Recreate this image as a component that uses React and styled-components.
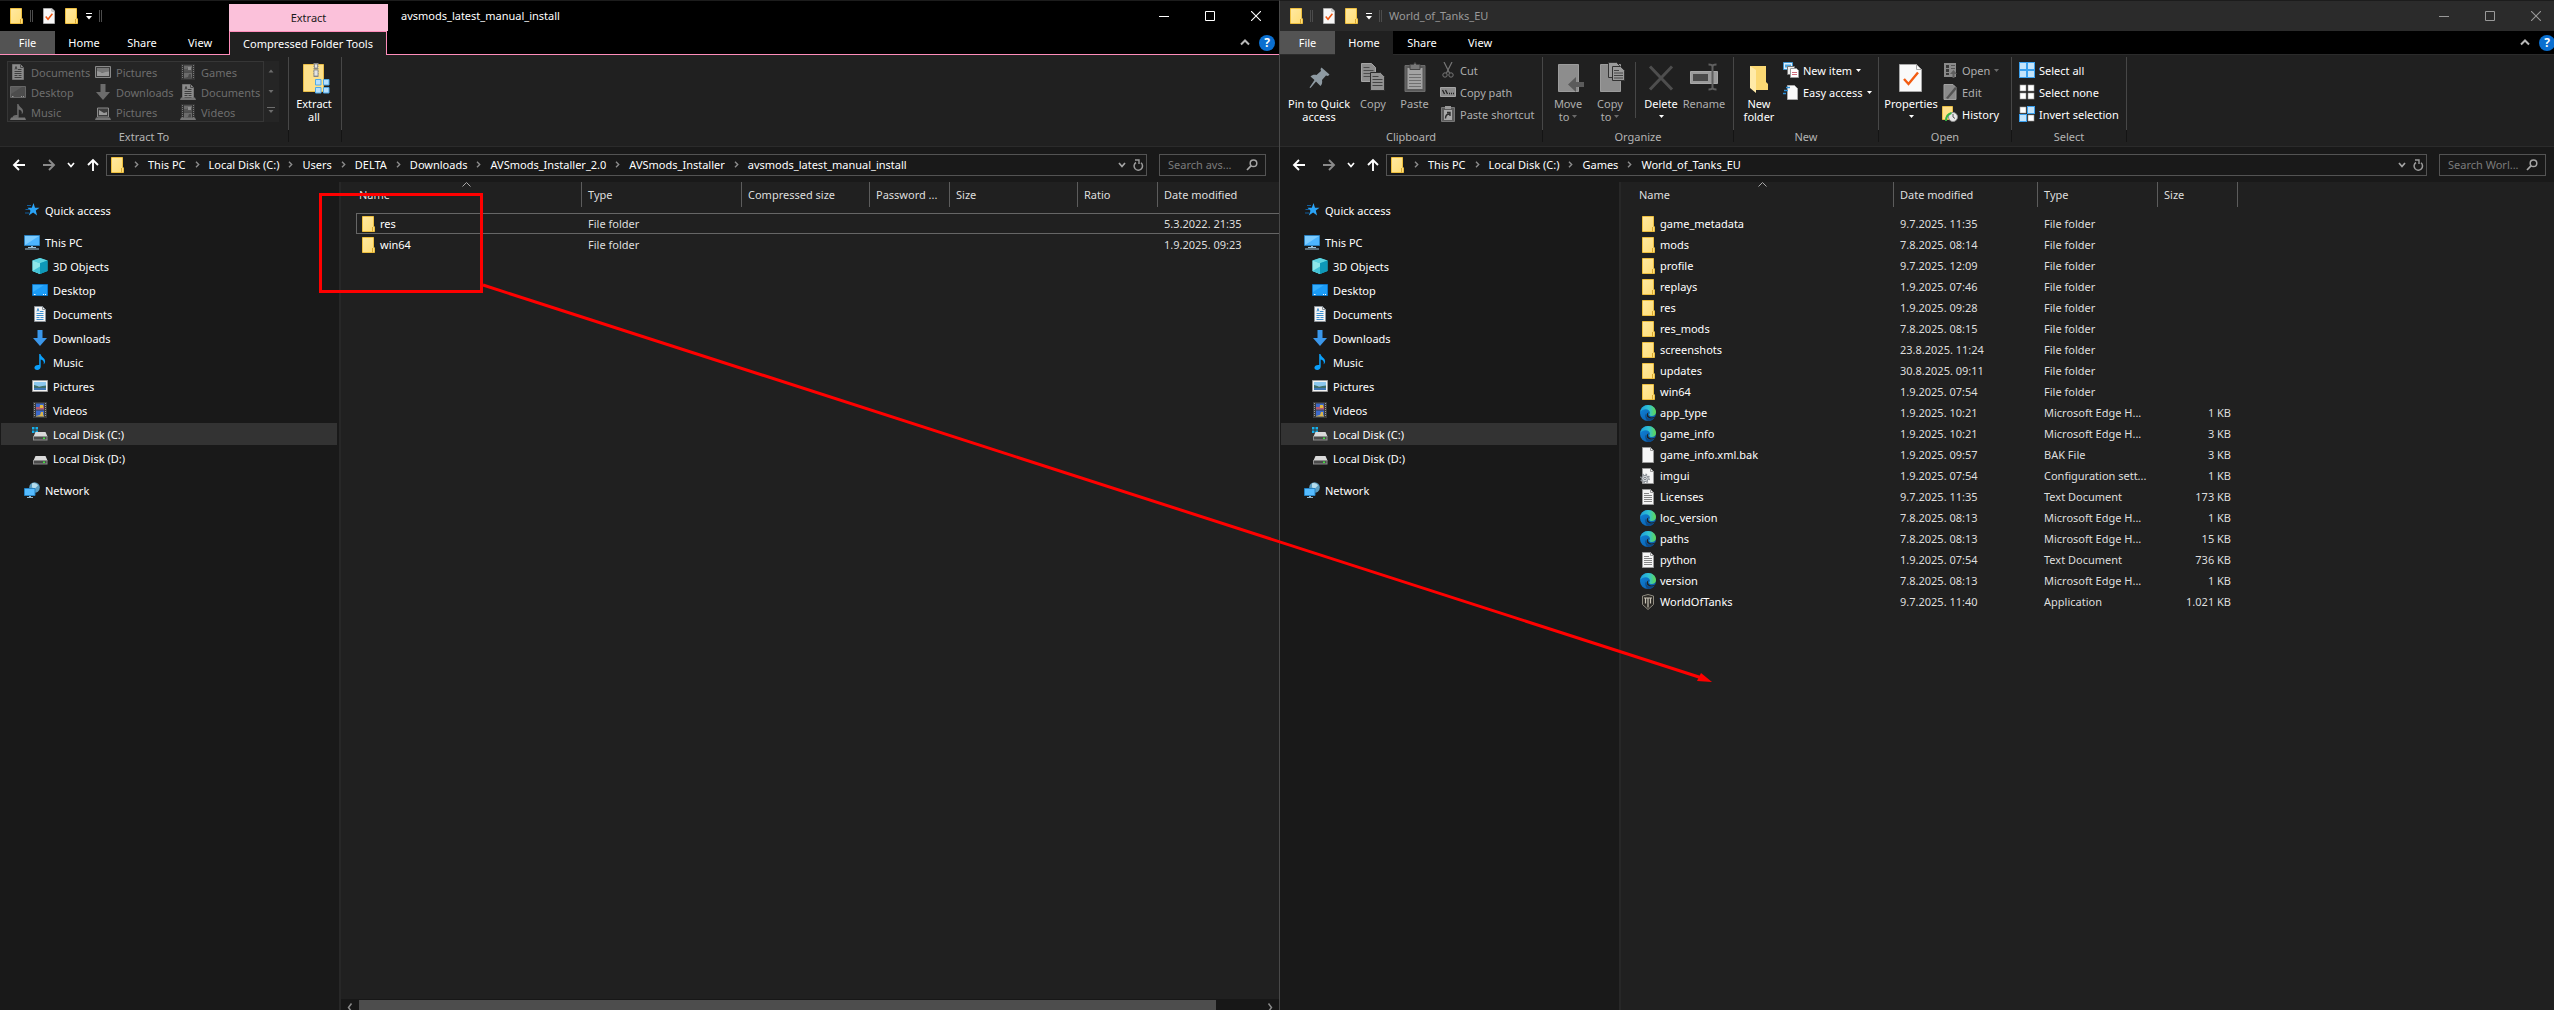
import React, { useId } from "react";
import styled, { createGlobalStyle } from "styled-components";

const FONT = `"Noto Sans", "Open Sans", sans-serif`;

const GlobalStyle = createGlobalStyle`
  *, *::before, *::after { box-sizing: border-box; }
  html, body, #root { height: 100%; }
  body {
    margin: 0;
    background: #191919;
    color: #fff;
    font-family: ${FONT};
    font-size: 11px;
    overflow: hidden;
  }
  button, input {
    font: inherit;
    color: inherit;
    border: 0;
    padding: 0;
    margin: 0;
    background: none;
  }
  svg { display: block; flex: none; }
`;

/* ---------------------------------------------------------------- layout */

const Desktop = styled.main`
  position: relative;
  display: flex;
  width: calc(100% + 6px);
  height: 100vh;
  overflow: hidden;
`;

const Window = styled.section`
  flex: 1 1 0;
  min-width: 0;
  display: flex;
  flex-direction: column;
  border-top: 1px solid #1c1c1c;
  border-right: 1px solid #484848;
  background: #191919;
`;

const TitleBar = styled.header`
  display: flex;
  height: 30px;
  background: ${(p) => (p.$active ? "#000" : "#2b2b2b")};
  color: ${(p) => (p.$active ? "#fff" : "#999")};
`;

const QuickBar = styled.div`
  display: flex;
  align-items: center;
  width: ${(p) => (p.$wide ? "229px" : "109px")};
  padding: 0 0 0 8px;
  gap: 6px;
`;

const QuickButton = styled.button`
  display: grid;
  place-items: center;
  width: ${(p) => (p.$slim ? "8px" : "16px")};
  height: 22px;
`;

const QuickRule = styled.span`
  width: 3px;
  height: 12px;
  margin-right: 2px;
  border: solid #4c4c4c;
  border-width: 0 1px;
`;

const ContextTitle = styled.div`
  align-self: flex-end;
  width: 159px;
  height: 27px;
  line-height: 28px;
  text-align: center;
  background: #fbc1da;
  color: #1b1b1b;
`;

const WindowName = styled.h1`
  flex: 1;
  margin: 0;
  padding-left: ${(p) => (p.$wide ? "13px" : "0")};
  font-size: 11px;
  font-weight: 400;
  line-height: 30px;
  white-space: nowrap;
`;

const CaptionButton = styled.button`
  display: grid;
  place-items: center;
  width: 46px;
  height: 29px;
`;

const TabRow = styled.div`
  display: flex;
  height: 24px;
  background: #000;
  border-bottom: 1px solid ${(p) => (p.$pink ? "#ff8dbb" : "#2b2b2b")};
`;

const Tab = styled.button`
  width: ${(p) => (p.$file ? "55px" : "58px")};
  height: 23px;
  line-height: 22px;
  background: ${(p) => (p.$file ? "#535353" : "none")};
  ${(p) => p.$open && `height: 24px; background: #202020;`}
`;

const ContextTab = styled.button`
  width: 158px;
  height: 24px;
  line-height: 22px;
  background: #202020;
  border: solid #ff8dbb;
  border-width: 1px 1px 0;
`;

const TabTools = styled.div`
  display: flex;
  align-items: center;
  gap: 9px;
  margin-left: auto;
  padding-right: 4px;
`;

const Ribbon = styled.div`
  display: flex;
  height: 92px;
  background: #202020;
  border-bottom: 1px solid #2b2b2b;
`;

const Group = styled.section`
  display: flex;
  flex-direction: column;
  width: ${(p) => p.$width}px;
  margin: 2px 0 4px;
  border-right: 1px solid;
  border-image: linear-gradient(#474747 72px, #141414 72px) 1;
`;

const GroupBody = styled.div`
  flex: none;
  display: flex;
  height: 72px;
  padding: 2px 0 0 ${(p) => (p.$gallery ? "7px" : "4px")};
`;

const GroupName = styled.h2`
  flex: none;
  margin: 0;
  font-size: 11px;
  font-weight: 400;
  line-height: 15px;
  text-align: center;
  color: #b4b4b4;
`;

const Big = styled.button`
  display: flex;
  flex-direction: column;
  align-items: center;
  width: ${(p) => p.$width}px;
  padding-top: 3px;
  line-height: 13px;
  white-space: nowrap;
  color: ${(p) => (p.$off ? "#aeaeae" : "#fff")};
  & > svg { margin-bottom: 3px; }
`;

const BigLine = styled.span`
  display: flex;
  align-items: center;
  gap: 3px;
  min-height: 13px;
`;

const SmallColumn = styled.div`
  display: flex;
  flex-direction: column;
`;

const Small = styled.button`
  display: flex;
  align-items: center;
  gap: 4px;
  height: 22px;
  padding: 0 3px;
  white-space: nowrap;
  color: ${(p) => (p.$off ? "#aeaeae" : "#fff")};
`;

const InnerRule = styled.span`
  width: 1px;
  height: 56px;
  margin: 3px 4px 0;
  background: #474747;
`;

const Gallery = styled.div`
  display: flex;
  width: 272px;
  height: 61px;
  margin-top: 2px;
  background: #252525;
`;

const GalleryGrid = styled.div`
  display: grid;
  grid-template-columns: 85px 85px 1fr;
  grid-template-rows: repeat(3, 20px);
  width: 257px;
  border: 1px solid #363636;
`;

const GalleryItem = styled.button`
  display: flex;
  align-items: center;
  gap: 5px;
  padding-left: 2px;
  color: #6d6d6d;
`;

const GallerySpin = styled.div`
  display: grid;
  grid-template-rows: repeat(3, 20px);
  width: 14px;
  color: #6d6d6d;
`;

const SpinButton = styled.button`
  display: grid;
  place-items: center;
`;

const AddressRow = styled.div`
  display: flex;
  align-items: center;
  height: 35px;
  padding-right: 13px;
`;

const NavButtons = styled.div`
  display: flex;
  width: 106px;
  padding-left: 11px;
`;

const NavButton = styled.button`
  display: grid;
  place-items: center;
  width: ${(p) => (p.$slim ? "14px" : "30px")};
  height: 22px;
  &:first-child { width: 16px; margin-right: 7px; }
  &:last-child { width: 24px; margin-left: 3px; }
`;

const AddressBox = styled.nav`
  flex: 1;
  display: flex;
  align-items: center;
  height: 22px;
  padding-left: 2px;
  border: 1px solid #535353;
`;

const Crumb = styled.button`
  line-height: 18px;
  white-space: nowrap;
`;

const CrumbMark = styled.span`
  display: grid;
  place-items: center;
  width: 23px;
`;

const BoxButton = styled.button`
  display: grid;
  place-items: center;
  width: 16px;
  height: 20px;
`;

const BoxTail = styled.div`
  display: flex;
  margin-left: auto;
`;

const SearchBox = styled.label`
  display: flex;
  align-items: center;
  width: 107px;
  height: 22px;
  margin-left: 12px;
  padding: 0 7px 0 8px;
  border: 1px solid #535353;
`;

const SearchInput = styled.input`
  flex: 1;
  min-width: 0;
  width: 0;
  &::placeholder { color: #7b7b7b; opacity: 1; }
`;

const Content = styled.div`
  flex: 1;
  min-height: 0;
  display: flex;
`;

const Sidebar = styled.nav`
  display: flex;
  flex-direction: column;
  gap: 2px;
  width: 341px;
  padding: 17px 2px 0 1px;
  border-right: 2px solid #272727;
`;

const Place = styled.button`
  display: flex;
  align-items: center;
  gap: 5px;
  height: 22px;
  margin-top: ${(p) => (p.$spaced ? "8px" : "0")};
  padding-left: ${(p) => (p.$child ? "31px" : "23px")};
  background: ${(p) => (p.$picked ? "#333" : "none")};
  white-space: nowrap;
`;

const FilePane = styled.div`
  flex: 1;
  min-width: 0;
  display: flex;
  flex-direction: column;
  overflow: hidden;
  background: #202020;
`;

const FileScroll = styled.div`
  flex: 1;
  min-height: 0;
  overflow: hidden;
  padding-left: 15px;
`;

const FileTable = styled.table`
  width: ${(p) => p.$width}px;
  table-layout: fixed;
  border-collapse: separate;
  border-spacing: 0;
`;

const HeadCell = styled.th`
  position: relative;
  height: 25px;
  padding: 0 6px 0 ${(p) => (p.$first ? "3px" : "6px")};
  border-right: 1px solid #5c5c5c;
  font-weight: 400;
  text-align: left;
  color: #dedede;
  overflow: hidden;
  text-overflow: ellipsis;
  white-space: nowrap;
`;

const SortMark = styled.span`
  position: absolute;
  top: 0;
  left: calc(50% - 7px);
`;

const FileBody = styled.tbody`
  &::before { content: ""; display: block; height: 6px; }
`;

const FileRow = styled.tr`
  height: 21px;
  outline: ${(p) => (p.$focused ? "1px solid #666" : "none")};
  outline-offset: -1px;
`;

const Cell = styled.td`
  padding: 0 7px 0 6px;
  line-height: 21px;
  text-align: ${(p) => (p.$right ? "right" : "left")};
  color: #dedede;
  overflow: hidden;
  text-overflow: ellipsis;
  white-space: nowrap;
`;

const NameCell = styled(Cell)`
  padding: 0 0 0 4px;
  color: #fff;
`;

const FileName = styled.span`
  display: flex;
  align-items: center;
  gap: 4px;
  height: 21px;
`;

const ScrollTrack = styled.div`
  display: flex;
  height: 11px;
  background: #171717;
  overflow: hidden;
`;

const ScrollButton = styled.button`
  display: grid;
  place-items: center;
  width: 18px;
  height: 17px;
`;

const ScrollLane = styled.div`
  flex: 1;
  padding-top: 1px;
`;

const ScrollThumb = styled.div`
  width: 95%;
  height: 17px;
  background: #4d4d4d;
`;

const Markup = styled.svg`
  position: absolute;
  top: 0;
  left: 0;
  pointer-events: none;
`;

/* ----------------------------------------------------------------- icons */

const Svg = ({ w = 16, h = 16, box, children }) => (
  <svg width={w} height={h} viewBox={box || `0 0 ${w} ${h}`} fill="none" aria-hidden="true">
    {children}
  </svg>
);

const FolderIcon = () => {
  const id = useId();
  return (
    <Svg>
      <defs>
        <linearGradient id={id} x1="0" y1="0" x2="1" y2="1">
          <stop offset="0" stopColor="#ffe9a2" />
          <stop offset="1" stopColor="#ffdd75" />
        </linearGradient>
      </defs>
      <path d="M2.5 .5h11v9.500l1 1v4.500h-12z" fill={`url(#${id})`} stroke="#eebf3f" />
      <path d="M12.500 11v4.500" stroke="#d9a72e" />
    </Svg>
  );
};

const CheckDoc = ({ w = 16, h = 16 }) => (
  <Svg w={w} h={h} box="0 0 16 16">
    <path d="M2.500 .5h8.500l2.500 2.500v12.500h-11z" fill="#f7f7f7" stroke="#b5b5b5" strokeWidth=".8" />
    <path d="M10.800 .6v2.600h2.600" stroke="#9a9a9a" strokeWidth=".7" />
    <path d="M4.700 8.600l2.300 2.700 4.400-5.600" stroke="#f0540f" strokeWidth="1.500" />
  </Svg>
);

const PropertiesIcon = () => (
  <Svg w={32} h={32}>
    <path d="M4.500 2.500h17l5 5v22h-22z" fill="#fafafa" stroke="#a8a8a8" />
    <path d="M21.500 2.500v5h5" stroke="#a8a8a8" />
    <path d="M9 17l4.500 5L23 10.500" stroke="#f25c12" strokeWidth="2.400" />
  </Svg>
);

const Drop = ({ dim }) => (
  <Svg w={5} h={3}>
    <path d="M0 0h5l-2.500 3z" fill={dim ? "#6a6a6a" : "#fff"} />
  </Svg>
);

const QuickDrop = () => (
  <Svg w={8} h={8}>
    <path d="M1 1.500h6" stroke="#fff" />
    <path d="M1 4h6l-3 3.500z" fill="#fff" />
  </Svg>
);

const MinIcon = () => (
  <Svg w={10} h={10}><path d="M0 5.500h10" stroke="currentColor" /></Svg>
);
const MaxIcon = () => (
  <Svg w={10} h={10}><path d="M.5 .5h9v9h-9z" stroke="currentColor" /></Svg>
);
const CloseIcon = () => (
  <Svg w={10} h={10}><path d="M0 0l10 10M10 0L0 10" stroke="currentColor" strokeWidth="1.100" /></Svg>
);
const CollapseIcon = () => (
  <Svg w={10} h={7}><path d="M1 5.500l4-4 4 4" stroke="#b9b9b9" strokeWidth="2" /></Svg>
);

const HelpMark = styled.button`
  width: 16px;
  height: 16px;
  border-radius: 8px;
  background: #0a6fd0;
  color: #fff;
  font-size: 12px;
  font-weight: 700;
  line-height: 16px;
  text-align: center;
`;

const Arrow = ({ turn = 0, color = "#fff" }) => (
  <Svg w={14} h={14}>
    <path d="M13 7H2M7 2L2 7l5 5" stroke={color} strokeWidth="1.900" transform={`rotate(${turn} 7 7)`} />
  </Svg>
);
const Chevron = ({ w = 8, color = "#fff" }) => (
  <Svg w={w} h={6} box="0 0 8 6">
    <path d="M1 1l3 3.500L7 1" stroke={color} strokeWidth="1.700" />
  </Svg>
);
const CrumbArrow = () => (
  <Svg w={5} h={7}><path d="M1 .8l2.700 2.700L1 6.200" stroke="#8c8c8c" strokeWidth="1.400" /></Svg>
);
const RefreshIcon = () => (
  <Svg w={11} h={12}>
    <path d="M3 3.500a4.200 4.200 0 1 0 5 .3" stroke="#9a9a9a" strokeWidth="1.500" />
    <path d="M2 1h4v4" stroke="#9a9a9a" strokeWidth="1.400" />
  </Svg>
);
const SearchIcon = () => (
  <Svg w={12} h={12}>
    <circle cx="7.500" cy="4.300" r="3.300" stroke="#a5a5a5" strokeWidth="1.500" />
    <path d="M5 6.800L1 11" stroke="#a5a5a5" strokeWidth="1.800" />
  </Svg>
);

const StarIcon = () => (
  <Svg>
    <path d="M9.500 1l1.500 4.700 4.500.1-3.700 2.800 1.300 5-4-3-4.300 2.900 1.700-4.800L3.500 5.800l4.300-.1z" fill="#2ba3f5" />
    <path d="M3 3.500h4M1.500 7.500h4M1 11h4" stroke="#0f5d9c" />
  </Svg>
);
const PcIcon = () => (
  <Svg>
    <path d="M.5 1.500h15v10H.5z" fill="#4db5ff" stroke="#2a7fbd" />
    <path d="M1 2h14L1 11z" fill="#7dccff" />
    <path d="M7 12h2v1.500H7z" fill="#8eb4cd" />
    <path d="M4 13.500h8M1 15h14" stroke="#9fc3d8" />
  </Svg>
);
const CubeIcon = () => (
  <Svg>
    <path d="M8 0l7.500 2.500v10.500L8 16 .5 13V2.500z" fill="#27b5cc" />
    <path d="M8 0l7.500 2.500L8 5.200.5 2.500z" fill="#5fd4e0" />
    <path d="M.5 2.500L8 5.200V16L.5 13z" fill="#8ee8ea" />
    <path d="M8 8.500L.5 13 8 16z" fill="#43c3d6" />
    <path d="M8 5.200l7.500-2.700v10.500L8 16z" fill="#0e98b8" />
  </Svg>
);
const DesktopIcon = ({ gray }) => (
  <Svg>
    <path d="M.5 2.500h15v11H.5z" fill={gray ? "#4d4d4d" : "#1b9cf7"} stroke={gray ? "#666" : "#0d74c4"} />
    <path d="M1 3h11L1 10z" fill={gray ? "#5a5a5a" : "#35aefc"} />
    <path d="M2 12.500h1.500M11 12.500h1M13 12.500h1" stroke={gray ? "#999" : "#fff"} />
  </Svg>
);
const DocIcon = ({ gray, tray }) => (
  <Svg>
    <path d="M2.500 .5h8l3 3v12h-11z" fill={gray ? "#8b8b8b" : "#f5f5f5"} stroke={gray ? "#747474" : "#8b9299"} />
    <path d="M10.500 .5v3h3" stroke={gray ? "#4a4a4a" : "#8b9299"} />
    <path
      d="M5 5.500l1-3 1 3M8 5.500h3.500M4.500 7.500h7M4.500 9.500h7M4.500 11.500h3M8.500 11.500h3M4.500 13.500h7"
      stroke={gray ? "#3e3e3e" : "#3b8fd1"}
    />
    {tray && <path d="M1 13.500h14l1 2.500H0z" fill="#757575" />}
  </Svg>
);
const DownIcon = ({ gray }) => (
  <Svg>
    <path d="M5.500 0h5v8H15l-7 8-7-8h4.500z" fill={gray ? "#6c6c6c" : "#3b97ea"} />
  </Svg>
);
const MusicIcon = ({ gray }) => (
  <Svg>
    <path
      d="M7.200 0h1.300c.3 2.800 4.600 4 4.600 7.200 0 1.300-.6 2.300-1.400 3 .7-2.700-.8-4.200-3-4.600v7.200c0 1.800-1.500 3.200-3.500 3.200-1.800 0-2.800-1-2.800-2.200 0-1.800 2.200-3.200 4.800-2.700z"
      fill={gray ? "#6c6c6c" : "#0ba0fb"}
    />
    {gray && <path d="M1 13.500h14l1 2.500H0z" fill="#757575" />}
  </Svg>
);
const PictureIcon = ({ gray, tray }) => (
  <Svg>
    <path d={tray ? "M2.500 4h11v9h-11z" : "M.5 2.500h15v11H.5z"} fill={gray ? "#3d3d3d" : "#f3f3f3"} stroke={gray ? "#8a8a8a" : "#9a9a9a"} />
    {!tray && <path d="M2 4h12v4H2z" fill={gray ? "#777" : "#8cc8ef"} />}
    <path d={tray ? "M4 6l5 3 3-1v3H4z" : "M2 7l5 1.500 7-1v4.500H2z"} fill={gray ? "#999" : "#3d6f6c"} />
    {!gray && <path d="M2 10h12v2H2z" fill="#3f77b5" />}
    {tray && <path d="M1 13.500h14l1 2.500H0z" fill="#757575" />}
  </Svg>
);
const VideoIcon = ({ gray, tray }) => (
  <Svg>
    <path d="M1 0h14v16H1z" fill={gray ? "#333" : "#3a3a3a"} />
    <path d="M2.500 1v14M13.500 1v14" stroke={gray ? "#7a7a7a" : "#9a9a9a"} strokeDasharray="1 1" />
    <path d="M4 1.500h8v6H4zM4 8.500h8v6H4z" fill={gray ? "#6b6b6b" : "#3c68c8"} />
    <path d="M4 5h3l2-2 3 1v3.500H4z" fill={gray ? "#555" : "#b25a6e"} />
    <path d="M8 3h3v3H8z" fill={gray ? "#8a8a8a" : "#e0b93c"} />
    <path d="M4 14l4-1 1-3h2v3l1 1v.5H4z" fill={gray ? "#4a4a4a" : "#d9b64a"} />
    {tray && <path d="M1 13.500h14l1 2.500H0z" fill="#757575" />}
  </Svg>
);
const DiskIcon = ({ system }) => (
  <Svg>
    {system && <path d="M0 1h2.500v2.500H0zM3.500 1H6v2.500H3.500zM0 4.500h2.500V7H0zM3.500 4.500H6V7H3.500z" fill="#15b0ec" />}
    <path d="M3.500 6h10l2 4.500H1.500z" fill="#d9d9d9" />
    <path d="M1 10h14.500v4.500H1z" fill="#8d8d8d" />
    <path d="M2 11h12.500v2.500H2z" fill="#4a4a4a" />
    <path d="M11 11.500h2v1.500h-2z" fill="#3fe03f" />
  </Svg>
);
const NetworkIcon = () => (
  <Svg>
    <circle cx="10.500" cy="5.500" r="5.300" fill="#5b9dc0" />
    <path d="M8 1.500c2-1 5 0 6 2l-3 3-3-1z" fill="#b4dcec" />
    <path d="M.5 6.500h10.500v7H.5z" fill="#56bcff" stroke="#2583c4" />
    <path d="M5 14h2v1H5zM3 15h6v1H3z" fill="#8fb4c9" />
  </Svg>
);

const EdgeIcon = () => {
  const a = useId();
  const b = useId();
  return (
    <Svg>
      <defs>
        <linearGradient id={a} x1="0" y1=".4" x2="1" y2=".4">
          <stop offset="0" stopColor="#1c9fdc" />
          <stop offset=".55" stopColor="#33c3d0" />
          <stop offset="1" stopColor="#62d94e" />
        </linearGradient>
        <linearGradient id={b} x1="0" y1="0" x2="1" y2="1">
          <stop offset="0" stopColor="#0f86dd" />
          <stop offset="1" stopColor="#0c59a4" />
        </linearGradient>
      </defs>
      <circle cx="8" cy="8" r="8" fill={`url(#${b})`} />
      <path d="M.2 7C.8 3 4 0 8 0c5 0 8 3.600 8 7 0 2.600-2 4-4.200 4-1.600 0-2.800-.6-2.600-1.500.5-.5.900-1.200.8-2C9.800 5.600 8 4.300 5.800 4.300 3.400 4.300 1.200 5.500.2 7z" fill={`url(#${a})`} />
      <path d="M6 8.500c-.5 3.300 2.300 5.500 5.500 5.300 1.200-.1 2.300-.6 3-1-1.500 2.100-3.900 3.300-6.500 3.200C5.800 15 4.400 11 6 8.500z" fill="#0b4a8a" />
      <path d="M8.800 7.300c-1 .8-1.200 3 .2 4.200 1.800 1.400 4.300 1 6.200-.1l-.7 1.400c-2.200 1.300-5.200 1-6.800-.5-1.400-1.400-1.500-4 1.100-5z" fill="#202020" />
    </Svg>
  );
};
const Blank = ({ lines, gear }) => (
  <Svg>
    <path d="M2.500 .5h8l3 3v12h-11z" fill="#f6f6f6" stroke="#9a9a9a" />
    <path d="M10.500 .5v3h3" stroke="#9a9a9a" />
    {lines && <path d="M4 4.500h5M4 6.500h8M4 8.500h8M4 10.500h8M4 12.500h8" stroke="#858585" />}
    {gear && (
      <g>
        <circle cx="5" cy="10.500" r="3.200" fill="#d5d8db" stroke="#8c9197" strokeWidth="1" />
        <circle cx="5" cy="10.500" r="4.200" stroke="#8c9197" strokeDasharray="1.600 1.700" strokeWidth="1.500" />
        <circle cx="5" cy="10.500" r="1.200" fill="#f6f6f6" stroke="#777c82" />
      </g>
    )}
  </Svg>
);
const TanksIcon = () => (
  <Svg>
    <path d="M2.500 2L8 .5 13.500 2v8.500L8 15.500l-5.500-5z" fill="#2a2824" stroke="#8f8b80" />
    <path d="M4 4h8M8 4v9.500M5.500 4v5.500M10.500 4v5.500" stroke="#c9c4b6" strokeWidth="1.200" />
  </Svg>
);

const ZipIcon = () => (
  <Svg w={32} h={32}>
    <path d="M5.500 2.500h20v27h-20z" fill="#fde08a" stroke="#e9bd47" />
    <path d="M18 1v14" stroke="#8a8a8a" strokeWidth="5" strokeDasharray="1.500 1" />
    <path d="M16.500 2h3v4h-3zM16 8h4v6h-4z" fill="#e4e4e4" stroke="#7c7c7c" strokeWidth=".7" />
    <path d="M17.500 17.500h5.500v5.500h-5.500zM25.500 17.500h5.500v5.500h-5.500zM17.500 25.500h5.500v5.500h-5.500zM25.500 25.500h5.500v5.500h-5.500z" fill="#b5e0ff" stroke="#4fa9e6" />
  </Svg>
);
const PinIcon = () => (
  <Svg w={32} h={32}>
    <path d="M18.500 5.500l8 7-1.500 1.500-2-.5-4 4.500c.5 2.500 0 4.500-1.500 6L13 19.500 7.500 26l-1-.5 5-7.500-4-3.500c1.500-1.500 3.500-2 6-1.500l4.500-4-.5-2z" fill="#8e9aa2" />
  </Svg>
);
const page = (x, y) => `M${x} ${y}h10l4 4v14h-14z`;
const rules = (x, y) => `M${x} ${y}h6M${x} ${y + 3}h10M${x} ${y + 6}h10M${x} ${y + 9}h10`;
const CopyIcon = () => (
  <Svg w={32} h={32}>
    <path d={page(4.5, 1.5)} fill="#8d8d8d" stroke="#a5a5a5" />
    <path d={rules(6.5, 5.5)} stroke="#4c4c4c" />
    <path d={page(13.5, 10.5)} fill="#929292" stroke="#2c2c2c" />
    <path d={rules(15.5, 14.5)} stroke="#444" />
  </Svg>
);
const PasteIcon = () => (
  <Svg w={32} h={32}>
    <path d="M6 3.500h20v26H6z" fill="#5a5a5a" stroke="#6c6c6c" />
    <path d="M8.500 6h15v21h-15z" fill="#a3a3a3" />
    <path d="M10 12.500h12M10 15.500h12M10 18.500h12M10 21.500h12M10 24.500h12" stroke="#6f6f6f" />
    <path d="M11 2.500h3.500L16 .5l1.500 2H21v5H11z" fill="#777" stroke="#444" />
  </Svg>
);
const CutIcon = () => (
  <Svg>
    <path d="M4 0l5.500 11M12 0L6.500 11" stroke="#767676" strokeWidth="1.200" />
    <circle cx="5" cy="13" r="2.200" stroke="#767676" />
    <circle cx="11" cy="13" r="2.200" stroke="#767676" />
  </Svg>
);
const PathIcon = () => (
  <Svg>
    <path d="M.5 3.500h15v9H.5z" fill="#8d8d8d" stroke="#a5a5a5" />
    <path d="M2.500 6l2 4M5.500 6l2 4M9 9.500h1M11 9.500h1M13 9.500h1" stroke="#222" strokeWidth="1.300" />
  </Svg>
);
const ShortcutIcon = () => (
  <Svg>
    <path d="M1.500 1.500h13v14h-13z" fill="#5c5c5c" stroke="#777" />
    <path d="M5 0h6v3H5z" fill="#999" />
    <path d="M4 4h8v10H4z" fill="#a9a9a9" />
    <path d="M5.500 12.500c0-3 1-4.500 4-4.500M7 6.500h3v3.500" stroke="#2d2d2d" strokeWidth="1.400" />
  </Svg>
);
const MoveIcon = () => (
  <Svg w={32} h={32}>
    <path d="M6.500 2.500h20v27h-20z" fill="#8d8d8d" stroke="#9c9c9c" />
    <path d="M32 20h-8v-5l-8 7.500 8 7.500v-5h8z" fill="#5b5b5b" />
  </Svg>
);
const CopyToIcon = () => (
  <Svg w={32} h={32}>
    <path d="M6.500 2.500h20v27h-20z" fill="#8d8d8d" stroke="#9c9c9c" />
    <path d="M14.500 .5h8l3 3v12h-11z" fill="#9b9b9b" stroke="#333" />
    <path d="M18.500 4.500h8l4 4v10h-12z" fill="#9b9b9b" stroke="#333" />
    <path d="M20 8.500h5M20 11h9M20 13.500h9M20 16h9" stroke="#444" />
  </Svg>
);
const DeleteIcon = () => (
  <Svg w={32} h={32}><path d="M5 4.500l22 23M27 4.500L5 27.500" stroke="#4e4e4e" strokeWidth="3" /></Svg>
);
const RenameIcon = () => (
  <Svg w={32} h={32}>
    <path d="M2.500 9.500h27v12h-27z" fill="#9b9b9b" stroke="#a8a8a8" />
    <path d="M5 12h15v7H5z" fill="#4a4a4a" />
    <path d="M24.500 3v24M20.500 2.500c2 0 4 .5 4 2 0-1.500 2-2 4-2M20.500 27.500c2 0 4-.5 4-2 0 1.500 2 2 4 2" stroke="#5f5f5f" strokeWidth="2" />
  </Svg>
);
const NewFolderIcon = () => (
  <Svg w={32} h={32}>
    <path d="M7 4h16v16l2 2v6H12z" fill="#fbd873" />
    <path d="M7 4l6 4v23l-6-5z" fill="#ffeaa8" />
  </Svg>
);
const NewItemIcon = () => (
  <Svg>
    <path d="M.5 .5h9v7h-9z" fill="#dcefff" stroke="#3d93cf" />
    <path d="M2 2.500h6v3H2z" fill="#4ca6e0" />
    <path d="M4.500 4.500h7v8h-7z" fill="#eee" stroke="#777" />
    <path d="M7.500 6.500h6l2 2v7h-8z" fill="#fff" stroke="#999" />
    <path d="M9 10.500h5M9 12.500h5" stroke="#d06b7c" />
  </Svg>
);
const EasyIcon = () => (
  <Svg>
    <path d="M4.500 1.500h7l3 3v11h-10z" fill="#fafafa" stroke="#aaa" />
    <path d="M3 3.500h4M1 6.500h4M0 9.500h3" stroke="#2d8fd6" strokeWidth="1.300" />
  </Svg>
);
const OpenIcon = () => (
  <Svg>
    <path d="M2 1h12v14H2z" fill="#8b8b8b" />
    <path d="M4 3h3v3H4zM4 7h3v3H4zM4 11h3v2H4z" fill="#3a3a3a" />
    <path d="M9 3.500h4M9 6.500h4" stroke="#555" />
    <path d="M10.500 16v-4H8l3.500-4 3.500 4h-2.500v4z" fill="#5f5f5f" />
  </Svg>
);
const EditIcon = () => (
  <Svg>
    <path d="M2 .5h9l3 3v12H2z" fill="#8b8b8b" stroke="#a0a0a0" />
    <path d="M4 14l9-11 2 1.500-9 10.500z" fill="#555" />
  </Svg>
);
const HistoryIcon = () => (
  <Svg>
    <path d="M.5 .5h10v13H.5z" fill="#ffe08a" stroke="#e9bf47" />
    <circle cx="11" cy="11" r="4.500" fill="#e8e8e8" stroke="#8d8d8d" />
    <path d="M11 8v3l2 1.500" stroke="#555" />
    <path d="M4 15c0-4 1.500-7 5.500-8" stroke="#35b044" strokeWidth="2" />
  </Svg>
);
const SelectIcon = ({ on }) => (
  <Svg>
    {[0, 1, 2, 3].map((i) => {
      const x = (i % 2) * 8;
      const y = i < 2 ? 0 : 8;
      const lit = on.includes(i);
      return (
        <g key={i}>
          {lit && <rect x={x} y={y} width="8" height="8" fill="#3ba0ee" />}
          <rect x={x + 1} y={y + 1} width="6" height="6" fill={lit ? "#c4e4fb" : "#fff"} stroke={lit ? "none" : "#9b9b9b"} strokeWidth=".6" />
        </g>
      );
    })}
  </Svg>
);

const SpinArrow = ({ kind }) => (
  <Svg w={8} h={8}>
    {kind === "more" && <path d="M0 .5h8" stroke="currentColor" />}
    <path d={kind === "up" ? "M1.500 5.500h5L4 2.500z" : "M1.500 3h5L4 6z"} fill="currentColor" />
  </Svg>
);

/* ------------------------------------------------------------ components */

function QuickAccess({ wide }) {
  return (
    <QuickBar $wide={wide}>
      <QuickButton aria-label="Window menu"><FolderIcon /></QuickButton>
      <QuickRule />
      <QuickButton aria-label="Properties"><CheckDoc /></QuickButton>
      <QuickButton aria-label="New folder"><FolderIcon /></QuickButton>
      <QuickButton aria-label="Customize" $slim><QuickDrop /></QuickButton>
      <QuickRule />
    </QuickBar>
  );
}

function Title({ name, active, context }) {
  return (
    <TitleBar $active={active}>
      <QuickAccess wide={Boolean(context)} />
      {context && <ContextTitle>{context}</ContextTitle>}
      <WindowName $wide={Boolean(context)}>{name}</WindowName>
      <CaptionButton aria-label="Minimize"><MinIcon /></CaptionButton>
      <CaptionButton aria-label="Maximize"><MaxIcon /></CaptionButton>
      <CaptionButton aria-label="Close"><CloseIcon /></CaptionButton>
    </TitleBar>
  );
}

function Tabs({ open, context }) {
  return (
    <TabRow $pink={Boolean(context)}>
      <Tab $file>File</Tab>
      {["Home", "Share", "View"].map((t) => (
        <Tab key={t} $open={t === open}>{t}</Tab>
      ))}
      {context && <ContextTab>{context}</ContextTab>}
      <TabTools>
        <button aria-label="Collapse the ribbon"><CollapseIcon /></button>
        <HelpMark aria-label="Help">?</HelpMark>
      </TabTools>
    </TabRow>
  );
}

function RibbonGroup({ name, width, gallery, children }) {
  return (
    <Group $width={width}>
      <GroupBody $gallery={gallery}>{children}</GroupBody>
      {name && <GroupName>{name}</GroupName>}
    </Group>
  );
}

function BigButton({ icon, width, lines, off, drop }) {
  return (
    <Big $width={width} $off={off}>
      {icon}
      {lines.map((line, i) => (
        <BigLine key={line}>
          {line}
          {drop && i === 1 && <Drop dim={off} />}
        </BigLine>
      ))}
      {drop && lines.length === 1 && <BigLine><Drop dim={off} /></BigLine>}
    </Big>
  );
}

function SmallButton({ icon, off, drop, children }) {
  return (
    <Small $off={off}>
      {icon}
      {children}
      {drop && <Drop dim={off} />}
    </Small>
  );
}

const galleryItems = [
  ["Documents", <DocIcon gray />],
  ["Pictures", <PictureIcon gray />],
  ["Games", <VideoIcon gray />],
  ["Desktop", <DesktopIcon gray />],
  ["Downloads", <DownIcon gray />],
  ["Documents", <DocIcon gray tray />],
  ["Music", <MusicIcon gray />],
  ["Pictures", <PictureIcon gray tray />],
  ["Videos", <VideoIcon gray tray />],
];

function ExtractRibbon() {
  return (
    <Ribbon>
      <RibbonGroup name="Extract To" width={289} gallery>
        <Gallery>
          <GalleryGrid>
            {galleryItems.map(([label, icon], i) => (
              <GalleryItem key={i}>{icon}{label}</GalleryItem>
            ))}
          </GalleryGrid>
          <GallerySpin>
            <SpinButton aria-label="Up"><SpinArrow kind="up" /></SpinButton>
            <SpinButton aria-label="Down"><SpinArrow kind="down" /></SpinButton>
            <SpinButton aria-label="More"><SpinArrow kind="more" /></SpinButton>
          </GallerySpin>
        </Gallery>
      </RibbonGroup>
      <RibbonGroup width={53}>
        <BigButton icon={<ZipIcon />} width={42} lines={["Extract", "all"]} />
      </RibbonGroup>
    </Ribbon>
  );
}

function HomeRibbon() {
  return (
    <Ribbon>
      <RibbonGroup name="Clipboard" width={263}>
        <BigButton icon={<PinIcon />} width={70} lines={["Pin to Quick", "access"]} />
        <BigButton icon={<CopyIcon />} width={38} lines={["Copy"]} off />
        <BigButton icon={<PasteIcon />} width={45} lines={["Paste"]} off />
        <SmallColumn>
          <SmallButton icon={<CutIcon />} off>Cut</SmallButton>
          <SmallButton icon={<PathIcon />} off>Copy path</SmallButton>
          <SmallButton icon={<ShortcutIcon />} off>Paste shortcut</SmallButton>
        </SmallColumn>
      </RibbonGroup>
      <RibbonGroup name="Organize" width={191}>
        <BigButton icon={<MoveIcon />} width={42} lines={["Move", "to"]} off drop />
        <BigButton icon={<CopyToIcon />} width={42} lines={["Copy", "to"]} off drop />
        <InnerRule />
        <BigButton icon={<DeleteIcon />} width={42} lines={["Delete"]} drop />
        <BigButton icon={<RenameIcon />} width={44} lines={["Rename"]} off />
      </RibbonGroup>
      <RibbonGroup name="New" width={145}>
        <BigButton icon={<NewFolderIcon />} width={42} lines={["New", "folder"]} />
        <SmallColumn>
          <SmallButton icon={<NewItemIcon />} drop>New item</SmallButton>
          <SmallButton icon={<EasyIcon />} drop>Easy access</SmallButton>
        </SmallColumn>
      </RibbonGroup>
      <RibbonGroup name="Open" width={133}>
        <BigButton icon={<PropertiesIcon />} width={56} lines={["Properties"]} drop />
        <SmallColumn>
          <SmallButton icon={<OpenIcon />} off drop>Open</SmallButton>
          <SmallButton icon={<EditIcon />} off>Edit</SmallButton>
          <SmallButton icon={<HistoryIcon />}>History</SmallButton>
        </SmallColumn>
      </RibbonGroup>
      <RibbonGroup name="Select" width={115}>
        <SmallColumn>
          <SmallButton icon={<SelectIcon on={[0, 1, 2, 3]} />}>Select all</SmallButton>
          <SmallButton icon={<SelectIcon on={[]} />}>Select none</SmallButton>
          <SmallButton icon={<SelectIcon on={[1, 2]} />}>Invert selection</SmallButton>
        </SmallColumn>
      </RibbonGroup>
    </Ribbon>
  );
}

function Address({ path, search }) {
  return (
    <AddressRow>
      <NavButtons>
        <NavButton aria-label="Back"><Arrow /></NavButton>
        <NavButton aria-label="Forward"><Arrow turn={180} color="#8a8a8a" /></NavButton>
        <NavButton $slim aria-label="Recent locations"><Chevron /></NavButton>
        <NavButton aria-label="Up"><Arrow turn={90} /></NavButton>
      </NavButtons>
      <AddressBox aria-label="Address">
        <FolderIcon />
        {path.map((part) => (
          <React.Fragment key={part}>
            <CrumbMark><CrumbArrow /></CrumbMark>
            <Crumb>{part}</Crumb>
          </React.Fragment>
        ))}
        <BoxTail>
          <BoxButton aria-label="Previous locations"><Chevron w={10} color="#a5a5a5" /></BoxButton>
          <BoxButton aria-label="Refresh"><RefreshIcon /></BoxButton>
        </BoxTail>
      </AddressBox>
      <SearchBox>
        <SearchInput placeholder={search} aria-label="Search" />
        <SearchIcon />
      </SearchBox>
    </AddressRow>
  );
}

const places = [
  { name: "Quick access", icon: <StarIcon /> },
  { name: "This PC", icon: <PcIcon />, spaced: true },
  { name: "3D Objects", icon: <CubeIcon />, child: true },
  { name: "Desktop", icon: <DesktopIcon />, child: true },
  { name: "Documents", icon: <DocIcon />, child: true },
  { name: "Downloads", icon: <DownIcon />, child: true },
  { name: "Music", icon: <MusicIcon />, child: true },
  { name: "Pictures", icon: <PictureIcon />, child: true },
  { name: "Videos", icon: <VideoIcon />, child: true },
  { name: "Local Disk (C:)", icon: <DiskIcon system />, child: true, picked: true },
  { name: "Local Disk (D:)", icon: <DiskIcon />, child: true },
  { name: "Network", icon: <NetworkIcon />, spaced: true },
];

function Places() {
  return (
    <Sidebar aria-label="Places">
      {places.map((p) => (
        <Place key={p.name} $spaced={p.spaced} $child={p.child} $picked={p.picked}>
          {p.icon}
          {p.name}
        </Place>
      ))}
    </Sidebar>
  );
}

const fileIcons = {
  folder: <FolderIcon />,
  edge: <EdgeIcon />,
  blank: <Blank />,
  gear: <Blank gear />,
  text: <Blank lines />,
  tanks: <TanksIcon />,
};

function Files({ columns, rows }) {
  const width = columns.reduce((sum, c) => sum + c.width, 0);
  return (
    <FileTable $width={width}>
      <colgroup>
        {columns.map((c) => <col key={c.name} style={{ width: c.width }} />)}
      </colgroup>
      <thead>
        <tr>
          {columns.map((c, i) => (
            <HeadCell key={c.name} $first={i === 0} scope="col">
              {c.label || c.name}
              {i === 0 && (
                <SortMark>
                  <Svg w={9} h={5}><path d="M.5 4.500l4-4 4 4" stroke="#a8a8a8" /></Svg>
                </SortMark>
              )}
            </HeadCell>
          ))}
        </tr>
      </thead>
      <FileBody>
        {rows.map((row) => (
          <FileRow key={row.name} $focused={row.focused}>
            <NameCell>
              <FileName>{fileIcons[row.kind]}{row.name}</FileName>
            </NameCell>
            {columns.slice(1).map((c) => (
              <Cell key={c.name} $right={c.right}>{row[c.field]}</Cell>
            ))}
          </FileRow>
        ))}
      </FileBody>
    </FileTable>
  );
}

const archiveColumns = [
  { name: "Name", width: 226 },
  { name: "Type", field: "type", width: 160 },
  { name: "Compressed size", width: 128 },
  { name: "Password protected", label: "Password ...", width: 80 },
  { name: "Size", width: 128 },
  { name: "Ratio", width: 80 },
  { name: "Date modified", field: "date", width: 144 },
];

const archiveRows = [
  { kind: "folder", name: "res", type: "File folder", date: "5.3.2022. 21:35", focused: true },
  { kind: "folder", name: "win64", type: "File folder", date: "1.9.2025. 09:23" },
];

const gameColumns = [
  { name: "Name", width: 258 },
  { name: "Date modified", field: "date", width: 144 },
  { name: "Type", field: "type", width: 120 },
  { name: "Size", field: "size", width: 80, right: true },
];

const gameRows = [
  ["folder", "game_metadata", "9.7.2025. 11:35", "File folder"],
  ["folder", "mods", "7.8.2025. 08:14", "File folder"],
  ["folder", "profile", "9.7.2025. 12:09", "File folder"],
  ["folder", "replays", "1.9.2025. 07:46", "File folder"],
  ["folder", "res", "1.9.2025. 09:28", "File folder"],
  ["folder", "res_mods", "7.8.2025. 08:15", "File folder"],
  ["folder", "screenshots", "23.8.2025. 11:24", "File folder"],
  ["folder", "updates", "30.8.2025. 09:11", "File folder"],
  ["folder", "win64", "1.9.2025. 07:54", "File folder"],
  ["edge", "app_type", "1.9.2025. 10:21", "Microsoft Edge H...", "1 KB"],
  ["edge", "game_info", "1.9.2025. 10:21", "Microsoft Edge H...", "3 KB"],
  ["blank", "game_info.xml.bak", "1.9.2025. 09:57", "BAK File", "3 KB"],
  ["gear", "imgui", "1.9.2025. 07:54", "Configuration sett...", "1 KB"],
  ["text", "Licenses", "9.7.2025. 11:35", "Text Document", "173 KB"],
  ["edge", "loc_version", "7.8.2025. 08:13", "Microsoft Edge H...", "1 KB"],
  ["edge", "paths", "7.8.2025. 08:13", "Microsoft Edge H...", "15 KB"],
  ["text", "python", "1.9.2025. 07:54", "Text Document", "736 KB"],
  ["edge", "version", "7.8.2025. 08:13", "Microsoft Edge H...", "1 KB"],
  ["tanks", "WorldOfTanks", "9.7.2025. 11:40", "Application", "1.021 KB"],
].map(([kind, name, date, type, size]) => ({ kind, name, date, type, size }));

function HorizontalScroll() {
  return (
    <ScrollTrack>
      <ScrollButton aria-label="Scroll left">
        <Svg w={6} h={9}><path d="M4.500 .5L1.500 4.500l3 4" stroke="#8a8a8a" strokeWidth="1.500" /></Svg>
      </ScrollButton>
      <ScrollLane><ScrollThumb /></ScrollLane>
      <ScrollButton aria-label="Scroll right">
        <Svg w={6} h={9}><path d="M1.500 .5l3 4-3 4" stroke="#8a8a8a" strokeWidth="1.500" /></Svg>
      </ScrollButton>
    </ScrollTrack>
  );
}

export default function App() {
  return (
    <>
      <GlobalStyle />
      <Desktop>
        <Window aria-label="avsmods_latest_manual_install">
          <Title name="avsmods_latest_manual_install" active context="Extract" />
          <Tabs context="Compressed Folder Tools" />
          <ExtractRibbon />
          <Address
            path={["This PC", "Local Disk (C:)", "Users", "DELTA", "Downloads", "AVSmods_Installer_2.0", "AVSmods_Installer", "avsmods_latest_manual_install"]}
            search="Search avs..."
          />
          <Content>
            <Places />
            <FilePane>
              <FileScroll><Files columns={archiveColumns} rows={archiveRows} /></FileScroll>
              <HorizontalScroll />
            </FilePane>
          </Content>
        </Window>
        <Window aria-label="World_of_Tanks_EU">
          <Title name="World_of_Tanks_EU" />
          <Tabs open="Home" />
          <HomeRibbon />
          <Address path={["This PC", "Local Disk (C:)", "Games", "World_of_Tanks_EU"]} search="Search Worl..." />
          <Content>
            <Places />
            <FilePane>
              <FileScroll><Files columns={gameColumns} rows={gameRows} /></FileScroll>
            </FilePane>
          </Content>
        </Window>
        <Markup width="1720" height="700" fill="none" aria-hidden="true">
          <rect x="320.500" y="194.500" width="161" height="97" stroke="#f00" strokeWidth="3" />
          <path d="M483 285L1702 678" stroke="#f00" strokeWidth="3" />
          <path d="M1712 682l-15-1 4-8z" fill="#f00" />
        </Markup>
      </Desktop>
    </>
  );
}
